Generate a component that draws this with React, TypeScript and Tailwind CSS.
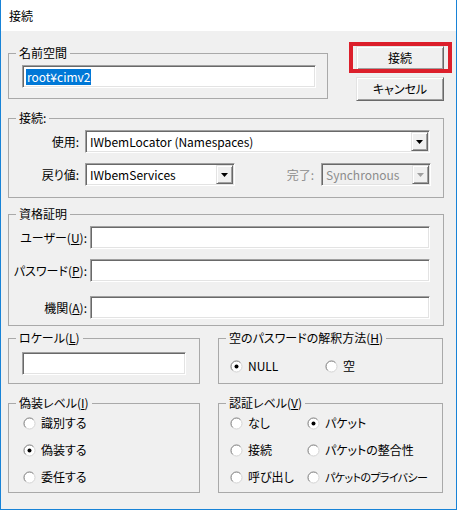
import React from "react";

const SUNKEN =
  "border border-t-[#a0a0a0] border-l-[#a0a0a0] border-b-white border-r-white shadow-[inset_1px_1px_0_#696969,inset_-1px_-1px_0_#e3e3e3]";
const RAISED =
  "border border-t-[#e3e3e3] border-l-[#e3e3e3] border-b-[#696969] border-r-[#696969] shadow-[inset_1px_1px_0_#ffffff,inset_-1px_-1px_0_#a0a0a0] bg-[#f0f0f0]";

function Group({
  label,
  className,
  children,
}: {
  label: React.ReactNode;
  className: string;
  children: React.ReactNode;
}) {
  return (
    <fieldset className={`border border-[#a9a9a9] m-0 p-0 min-w-0 ${className}`}>
      <legend className="ml-[7px] px-[3px] leading-[14px] whitespace-nowrap">{label}</legend>
      {children}
    </fieldset>
  );
}

function Arrow({ disabled }: { disabled?: boolean }) {
  return (
    <div className={`w-[17px] flex items-center justify-center ${RAISED}`}>
      <svg width="7" height="4" viewBox="0 0 7 4">
        <path d="M0 0 H7 L3.5 4 Z" fill={disabled ? "#a0a0a0" : "#000000"} />
      </svg>
    </div>
  );
}

function Combo({
  w,
  text,
  disabled,
}: {
  w: string;
  text: string;
  disabled?: boolean;
}) {
  return (
    <div
      className={`h-[23px] flex p-[1px] ${w} ${SUNKEN} ${
        disabled ? "bg-[#f0f0f0] text-[#8c8c8c]" : "bg-white"
      }`}
    >
      <div className="flex-1 flex items-center pl-[3px] whitespace-nowrap overflow-hidden">
        {text}
      </div>
      <Arrow disabled={disabled} />
    </div>
  );
}

function TextBox({ w, children }: { w: string; children?: React.ReactNode }) {
  return (
    <div className={`h-[23px] bg-white flex items-center pl-[3px] ${w} ${SUNKEN}`}>
      {children}
    </div>
  );
}

function Radio({ checked, label }: { checked?: boolean; label: React.ReactNode }) {
  return (
    <div className="flex items-center gap-[5px] h-[18px] whitespace-nowrap">
      <svg width="13" height="13" viewBox="0 0 13 13" className="shrink-0">
        <circle cx="6.5" cy="6.5" r="5.5" fill="#ffffff" stroke="#d4d4d4" strokeWidth="1" />
        <path
          d="M2.6 10.4 A5.5 5.5 0 0 1 10.4 2.6"
          fill="none"
          stroke="#8a8a8a"
          strokeWidth="1"
        />
        {checked && <circle cx="6.5" cy="6.5" r="2" fill="#000000" />}
      </svg>
      <span>{label}</span>
    </div>
  );
}

function U({ c }: { c: string }) {
  return <span className="underline underline-offset-[1px]">{c}</span>;
}

export default function App() {
  return (
    <div className="w-[457px] h-[510px] flex flex-col border-x border-b border-[#1883d7] bg-white text-black text-[12px] leading-[14px] font-['Noto_Sans_CJK_JP','Noto_Sans',sans-serif] [font-feature-settings:'palt']">
      <div className="h-[31px] shrink-0 flex items-center pl-[8px] bg-white">接続</div>
      <div className="flex-1 bg-[#f0f0f0] pl-[7px] pr-[12px] pt-[15px] flex flex-col">
        {/* Row 1 */}
        <div className="flex items-start">
          <Group label="名前空間" className="w-[320px]">
            <div className="pt-[5px] pb-[10px] pl-[13px]">
              <TextBox w="w-[294px]">
                <span className="bg-[#0078d7] text-white px-[1px] leading-[16px]">
                  root¥cimv2
                </span>
              </TextBox>
            </div>
          </Group>
          <div className="ml-[28px] flex flex-col gap-[7px]">
            <div className="relative">
              <button className={`w-[88px] h-[24px] flex items-center justify-center ${RAISED}`}>
                接続
              </button>
              <div className="absolute -left-[7px] -top-[4px] w-[103px] h-[31px] border-[4px] border-[#dc1f2b] pointer-events-none" />
            </div>
            <button className={`w-[88px] h-[24px] flex items-center justify-center ${RAISED}`}>
              キャンセル
            </button>
          </div>
        </div>

        {/* 接続 */}
        <Group label="接続:" className="mt-[10px]">
          <div className="pt-[5px] pb-[11px] pr-[12px] flex flex-col gap-[10px]">
            <div className="flex items-center">
              <div className="w-[70px] text-right whitespace-nowrap">使用:</div>
              <div className="ml-[6px]">
                <Combo w="w-[345px]" text="IWbemLocator (Namespaces)" />
              </div>
            </div>
            <div className="flex items-center">
              <div className="w-[70px] text-right whitespace-nowrap">戻り値:</div>
              <div className="ml-[6px]">
                <Combo w="w-[150px]" text="IWbemServices" />
              </div>
              <div className="ml-auto text-[#8c8c8c] whitespace-nowrap">完了:</div>
              <div className="ml-[7px]">
                <Combo w="w-[110px]" text="Synchronous" disabled />
              </div>
            </div>
          </div>
        </Group>

        {/* 資格証明 */}
        <Group label="資格証明" className="mt-[9px]">
          <div className="pt-[5px] pb-[6px] flex flex-col">
            <div className="flex items-center">
              <div className="w-[78px] text-right whitespace-nowrap">
                ユーザー(<U c="U" />):
              </div>
              <div className="ml-[3px]">
                <TextBox w="w-[340px]" />
              </div>
            </div>
            <div className="flex items-center mt-[10px]">
              <div className="w-[78px] text-right whitespace-nowrap">
                パスワード(<U c="P" />):
              </div>
              <div className="ml-[3px]">
                <TextBox w="w-[340px]" />
              </div>
            </div>
            <div className="flex items-center mt-[14px]">
              <div className="w-[78px] text-right whitespace-nowrap">
                機関(<U c="A" />):
              </div>
              <div className="ml-[3px]">
                <TextBox w="w-[340px]" />
              </div>
            </div>
          </div>
        </Group>

        {/* Row 4 */}
        <div className="mt-[5px] flex gap-[18px]">
          <Group
            label={
              <>
                ロケール(<U c="L" />)
              </>
            }
            className="w-[192px]"
          >
            <div className="pt-[7px] pb-[8px] pl-[13px]">
              <TextBox w="w-[164px]" />
            </div>
          </Group>
          <Group
            label={
              <>
                空のパスワードの解釈方法(<U c="H" />)
              </>
            }
            className="w-[225px]"
          >
            <div className="pt-[12px] pb-[8px] pl-[11px] flex">
              <div className="w-[95px]">
                <Radio checked label="NULL" />
              </div>
              <Radio label="空" />
            </div>
          </Group>
        </div>

        {/* Row 5 */}
        <div className="mt-[12px] flex gap-[18px]">
          <Group
            label={
              <>
                偽装レベル(<U c="I" />)
              </>
            }
            className="w-[192px]"
          >
            <div className="pt-[4px] pb-[6px] pl-[14px] flex flex-col gap-[9px]">
              <Radio label="識別する" />
              <Radio checked label="偽装する" />
              <Radio label="委任する" />
            </div>
          </Group>
          <Group
            label={
              <>
                認証レベル(<U c="V" />)
              </>
            }
            className="w-[225px]"
          >
            <div className="pt-[4px] pb-[6px] pl-[11px] grid grid-cols-[77px_1fr] gap-y-[9px]">
              <Radio label="なし" />
              <Radio checked label="パケット" />
              <Radio label="接続" />
              <Radio label="パケットの整合性" />
              <Radio label="呼び出し" />
              <Radio
                label={
                  <span className="text-[11px] tracking-[-0.6px]">パケットのプライバシー</span>
                }
              />
            </div>
          </Group>
        </div>
      </div>
    </div>
  );
}
